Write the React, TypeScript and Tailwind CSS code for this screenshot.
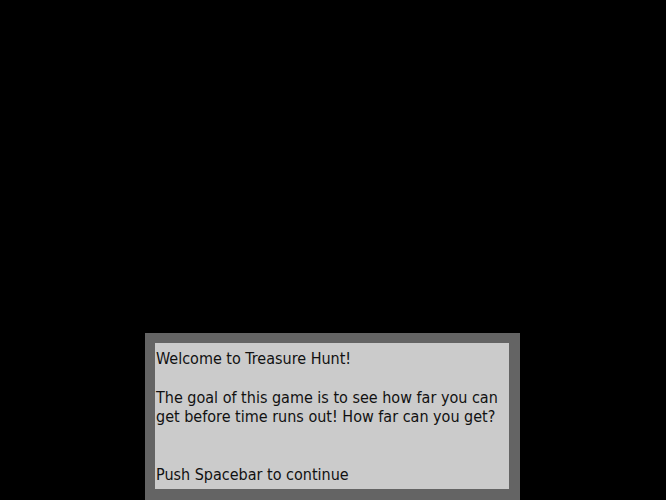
export default function App() {
  return (
    <div className="w-[666px] h-[500px] bg-black overflow-hidden pt-[333px] pl-[145px]">
      {/* DIALOG */}
      <div className="w-[375px] h-[167px] bg-[#646464] pt-[10px] pl-[10px]">
        <div
          className="w-[354px] h-[146px] bg-[#cbcbcb] pl-[1px] pt-[6px] text-[16px] leading-[19.3px] text-[#111] whitespace-nowrap font-stretch-condensed"
          style={{ fontFamily: '"DejaVu Sans Condensed", "DejaVu Sans", sans-serif' }}
        >
          <p>Welcome to Treasure Hunt!</p>
          <p className="mt-[19.3px]">
            The goal of this game is to see how far you can
            <br />
            get before time runs out! How far can you get?
          </p>
          <p className="mt-[38.6px]">Push Spacebar to continue</p>
        </div>
      </div>
    </div>
  );
}
